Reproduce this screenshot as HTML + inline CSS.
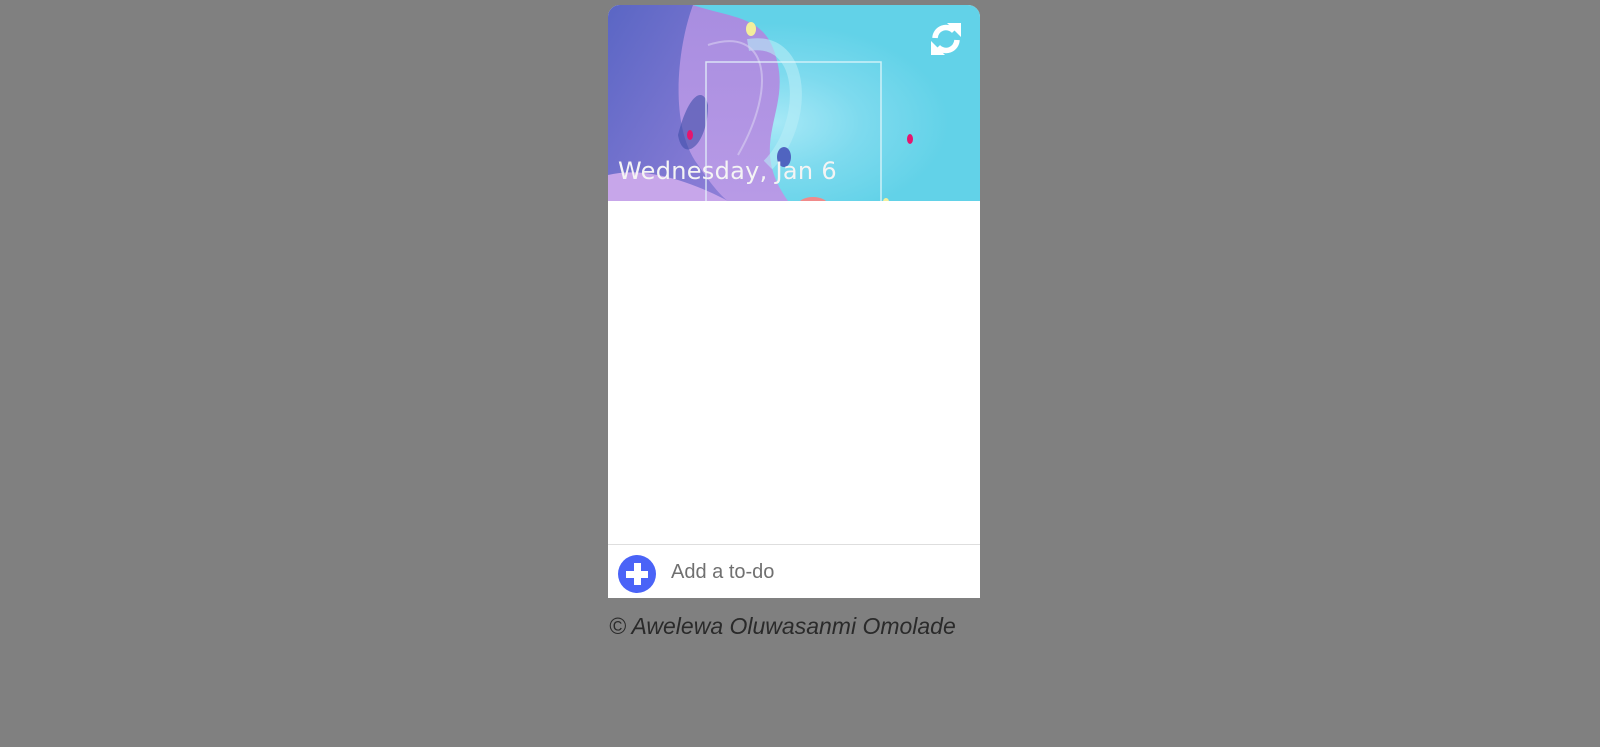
<!DOCTYPE html>
<html><head><style>
html,body{margin:0;padding:0;background:#808080;width:1600px;height:747px;overflow:hidden;font-family:"Liberation Sans",sans-serif}
.card{position:absolute;left:608px;top:5px;width:372px;height:593px;background:#fff;border-radius:12px 12px 0 0;overflow:hidden}
.hdr{position:absolute;left:0;top:0;width:372px;height:196px;background:radial-gradient(ellipse at 45% 60%,#a6e8f6 0%,#7ddaee 30%,#62d2e8 60%);overflow:hidden}
.date{position:absolute;left:10px;top:152px;color:#f4f4f4;font-family:"DejaVu Sans",sans-serif;font-size:24px;letter-spacing:0.3px}
.foot{position:absolute;left:0;top:539px;width:372px;height:54px;border-top:1px solid #dedede}
.plus{position:absolute;left:10px;top:10px;width:38px;height:38px;border-radius:50%;background:#4a63f7}
.plus:before{content:"";position:absolute;left:8px;top:16px;width:22px;height:7px;background:#fff}
.plus:after{content:"";position:absolute;left:16px;top:8px;width:7px;height:22px;background:#fff}
.add{position:absolute;left:63px;top:16px;font-size:20px;color:#707070}
.copy{position:absolute;left:609px;top:613px;font-size:23px;font-style:italic;color:#2a2a2a}
</style></head><body>
<div class="card">
<div class="hdr">
<svg width="372" height="196" style="position:absolute;left:0;top:0">
<defs>
<linearGradient id="g1" x1="0" y1="0" x2="1" y2="1"><stop offset="0" stop-color="#5a66c4"/><stop offset="1" stop-color="#8f7fd8"/></linearGradient>
<linearGradient id="g2" x1="0" y1="0" x2="0" y2="1"><stop offset="0" stop-color="#a88de0"/><stop offset="1" stop-color="#b89ae6"/></linearGradient>
</defs>
<path d="M0 0 H85 C130 15 160 10 170 60 C180 110 140 140 180 196 H0 Z" fill="url(#g2)"/>
<path d="M0 0 H85 C70 40 60 120 90 160 C110 190 120 196 120 196 H0 Z" fill="url(#g1)"/>
<path d="M70 130 C80 90 95 80 100 100 C100 140 75 160 70 130 Z" fill="#3f4fa8" opacity="0.6"/>
<path d="M0 170 C40 160 90 180 120 196 H0Z" fill="#c7a6ea"/>
<path d="M140 40 C200 30 200 120 160 160" stroke="#b8ecf6" stroke-width="12" fill="none" opacity="0.6"/>
<path d="M100 40 C160 20 170 80 130 150" stroke="#d9d0f2" stroke-width="2" fill="none" opacity="0.6"/>
<rect x="98" y="57" width="175" height="150" fill="none" stroke="#e6f7fb" stroke-width="1.5" opacity="0.8"/>
<ellipse cx="143" cy="24" rx="5" ry="7" fill="#f3ee9c"/>
<ellipse cx="82" cy="130" rx="3" ry="5" fill="#e5166e"/>
<ellipse cx="302" cy="134" rx="3" ry="5" fill="#e5166e"/>
<ellipse cx="176" cy="152" rx="7" ry="10" fill="#5064c0"/>
<ellipse cx="205" cy="200" rx="15" ry="8" fill="#f08a8a"/>
<ellipse cx="278" cy="197" rx="3" ry="4" fill="#f3ee9c"/>
<g transform="translate(338,34)" fill="none" stroke="#fff" stroke-width="5.5">
<path d="M-11 -1 A11 11 0 0 1 8 -8"/><path d="M11 1 A11 11 0 0 1 -8 8"/>
</g>
<path d="M339 18 L353 18 L353 32 Z" fill="#fff"/>
<path d="M337 50 L323 50 L323 36 Z" fill="#fff"/>
</svg>
<div class="date">Wednesday, Jan 6</div>
</div>
<div class="foot"><div class="plus"></div><div class="add">Add a to-do</div></div>
</div>
<div class="copy">© Awelewa Oluwasanmi Omolade</div>
</body></html>
